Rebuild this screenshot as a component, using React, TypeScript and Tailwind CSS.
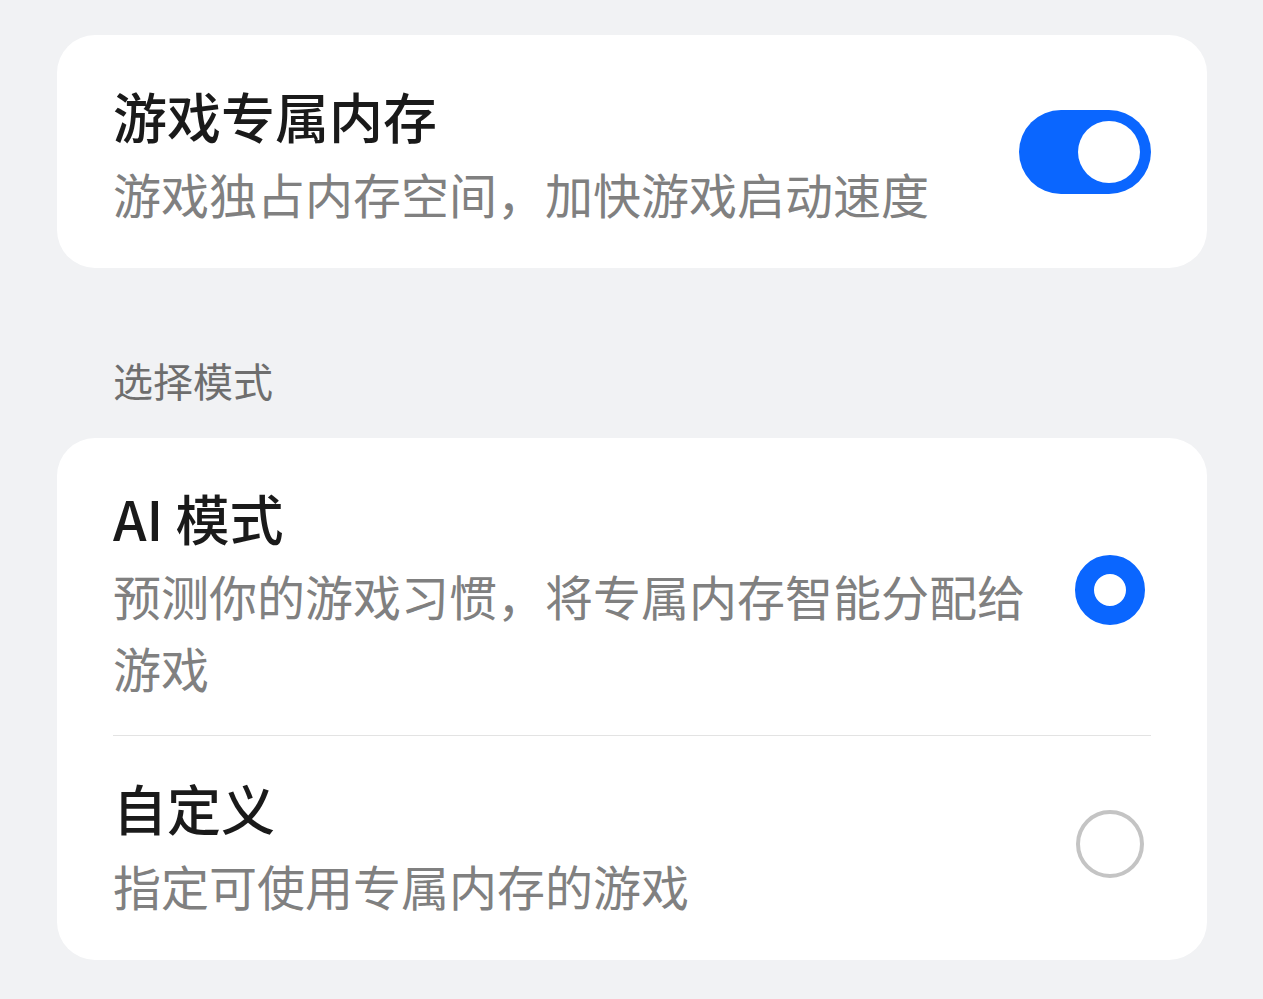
const font = { fontFamily: '"Noto Sans CJK SC", "Noto Sans", sans-serif' };

const Toggle = ({ on }: { on: boolean }) => (
  <div
    className={`w-[132px] h-[84px] rounded-full flex items-center px-[11px] shrink-0 ${
      on ? 'bg-[#0a66ff] justify-end' : 'bg-[#d9d9d9] justify-start'
    }`}
  >
    <div className="w-[62px] h-[62px] rounded-full bg-white" />
  </div>
);

const Radio = ({ checked, className = '' }: { checked: boolean; className?: string }) =>
  checked ? (
    <div className={`w-[70px] h-[70px] rounded-full border-[19px] border-[#0a66ff] bg-white shrink-0 mr-[6px] ${className}`} />
  ) : (
    <div className={`w-[68px] h-[68px] rounded-full border-[4px] border-[#c4c4c4] bg-white shrink-0 mr-[7px] ${className}`} />
  );

export default function App() {
  return (
    <div className="min-h-[999px] bg-[#f1f2f4] pl-[57px] pr-[56px] pt-[35px] pb-[40px]" style={font}>
      {/* 游戏专属内存 */}
      <div className="bg-white rounded-[38px] px-[56px] flex items-center justify-between">
        <div className="pt-[48px] pb-[39px]">
          <div className="text-[54px] leading-[66px] font-medium text-[#1a1a1a]">游戏专属内存</div>
          <div className="mt-[8px] text-[48px] leading-[72px] text-[#808080]">
            游戏独占内存空间，加快游戏启动速度
          </div>
        </div>
        <Toggle on />
      </div>

      {/* 选择模式 */}
      <div className="pl-[56px] pt-[85px] pb-[31px] text-[40px] leading-[54px] text-[#6e6e6e]">选择模式</div>

      <div className="bg-white rounded-[38px] px-[56px]">
        <div className="flex items-center justify-between gap-[40px] border-b border-[#e3e3e3]">
          <div className="flex-1 pt-[47px] pb-[32px]">
            <div className="text-[54px] leading-[66px] font-medium text-[#1a1a1a]">AI 模式</div>
            <div className="mt-[8px] text-[48px] leading-[72px] text-[#808080]">
              预测你的游戏习惯，将专属内存智能分配给游戏
            </div>
          </div>
          <Radio checked className="mt-[6px]" />
        </div>
        <div className="flex items-center justify-between gap-[40px]">
          <div className="flex-1 pt-[39px] pb-[39px]">
            <div className="text-[54px] leading-[66px] font-medium text-[#1a1a1a]">自定义</div>
            <div className="mt-[8px] text-[48px] leading-[72px] text-[#808080]">指定可使用专属内存的游戏</div>
          </div>
          <Radio checked={false} className="-mt-[8px]" />
        </div>
      </div>
    </div>
  );
}
